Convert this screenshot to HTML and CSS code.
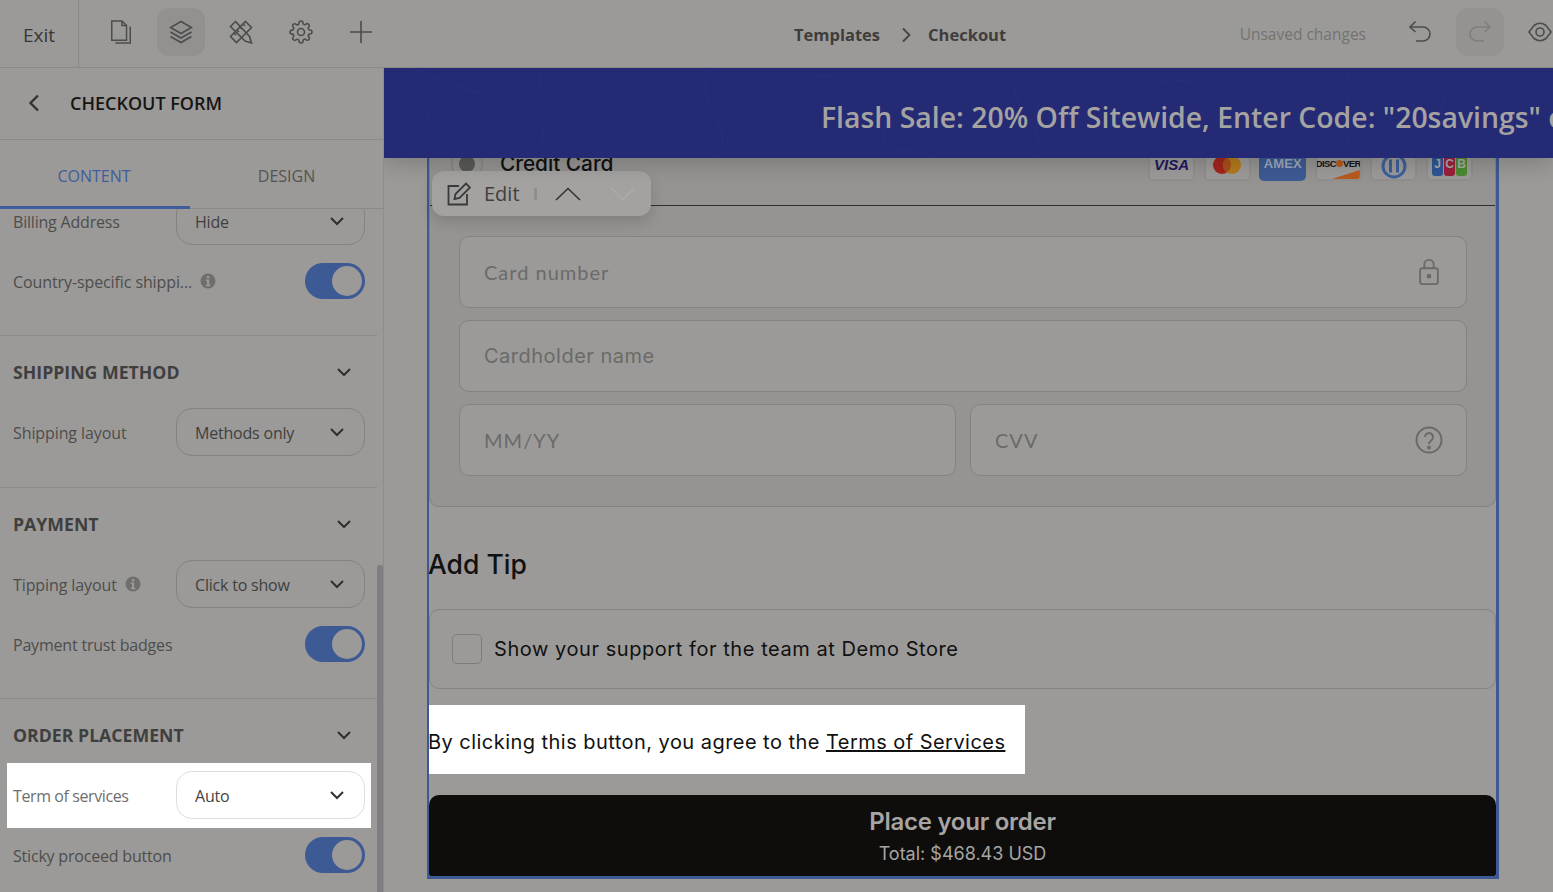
FILE: index.html
```html
<!DOCTYPE html>
<html>
    <head>
        <meta charset="utf-8">
        <title>Checkout template</title>
        <link rel="stylesheet" href="styles.css">
    </head>
    <body>
        <svg class="defs" width="0" height="0">
            <symbol id="chevron" viewBox="0 0 16 10"><path d="M2 2l6 6 6-6" fill="none" stroke="currentColor" stroke-width="2"/></symbol>
            <symbol id="info" viewBox="0 0 16 16"><circle cx="8" cy="8" r="7.5" fill="currentColor"/><rect x="6.9" y="3" width="2.4" height="2.4" fill="#9b9a98"/><path d="M5.8 6.6h3.4v5.2h1.2v1.4H5.8v-1.4h1.2V8H5.8z" fill="#9b9a98"/></symbol>
        </svg>

        <!-- Top bar -->
        <header class="topbar">
            <div class="exit">Exit</div>
            <div class="tools">
                <div class="tool">
                    <svg class="icon" viewBox="0 0 24 26"><path d="M2 1h11l5 5v16H2z"/><path d="M13 1v5h5"/><path d="M22 7v18H6"/></svg>
                </div>
                <div class="tool tool-on">
                    <svg class="icon" viewBox="0 0 24 24"><path d="M12 1.500L1.500 7.500 12 13.500l10.500-6z"/><path d="M1.500 12L12 18l10.500-6"/><path d="M1.500 16.500L12 22.500l10.500-6"/></svg>
                </div>
                <div class="tool">
                    <svg class="icon" viewBox="0 0 24 24"><path d="M16.500 1.500l6 6L7.500 22.500l-6-6z"/><path d="M5 13l2 2M8 10l2 2M11 7l2 2M14 4l2 2"/><path d="M6.500 1.500l-5 5L16 21l6.500 2-2-6.500z"/></svg>
                </div>
                <div class="tool">
                    <svg class="icon" viewBox="0 0 24 24"><circle cx="12" cy="12" r="3.500"/><path d="M19.400 15a1.650 1.650 0 0 0 .33 1.820l.06.06a2 2 0 0 1 0 2.830 2 2 0 0 1-2.830 0l-.06-.06a1.650 1.650 0 0 0-1.820-.33 1.650 1.650 0 0 0-1 1.510V21a2 2 0 0 1-2 2 2 2 0 0 1-2-2v-.09A1.650 1.650 0 0 0 9 19.400a1.650 1.650 0 0 0-1.820.33l-.06.06a2 2 0 0 1-2.830 0 2 2 0 0 1 0-2.830l.06-.06a1.650 1.650 0 0 0 .33-1.820 1.650 1.650 0 0 0-1.510-1H3a2 2 0 0 1-2-2 2 2 0 0 1 2-2h.09A1.650 1.650 0 0 0 4.600 9a1.650 1.650 0 0 0-.33-1.820l-.06-.06a2 2 0 0 1 0-2.830 2 2 0 0 1 2.830 0l.06.06a1.650 1.650 0 0 0 1.820.33H9a1.650 1.650 0 0 0 1-1.510V3a2 2 0 0 1 2-2 2 2 0 0 1 2 2v.09a1.650 1.650 0 0 0 1 1.510 1.650 1.650 0 0 0 1.820-.33l.06-.06a2 2 0 0 1 2.830 0 2 2 0 0 1 0 2.830l-.06.06a1.650 1.650 0 0 0-.33 1.820V9a1.650 1.650 0 0 0 1.510 1H21a2 2 0 0 1 2 2 2 2 0 0 1-2 2h-.09a1.650 1.650 0 0 0-1.510 1z"/></svg>
                </div>
                <div class="tool">
                    <svg class="icon" viewBox="0 0 24 24"><path d="M12 1v22M1 12h22"/></svg>
                </div>
            </div>
            <div class="crumbs">
                <span>Templates</span>
                <svg class="crumb-arrow" viewBox="0 0 10 16"><path d="M2 1.500L8.500 8 2 14.500"/></svg>
                <span>Checkout</span>
            </div>
            <div class="actions">
                <span class="unsaved">Unsaved changes</span>
                <div class="tool">
                    <svg class="icon" viewBox="0 0 24 24"><path d="M7.500 1.500L2 7l5.500 5"/><path d="M2 7h13a6.500 6.500 0 0 1 0 14H8"/></svg>
                </div>
                <div class="tool tool-off">
                    <svg class="icon" viewBox="0 0 24 24"><path d="M16.500 1.500L22 7l-5.500 5"/><path d="M22 7H9a6.500 6.500 0 0 0 0 14h7"/></svg>
                </div>
                <div class="tool">
                    <svg class="icon" viewBox="0 0 24 24"><path d="M1 12L6 5.500Q12 1 18 5.500L23 12l-5 6.500Q12 23 6 18.500z"/><circle cx="12" cy="12" r="4"/></svg>
                </div>
            </div>
        </header>

        <div class="main">
            <!-- Settings sidebar -->
            <aside class="sidebar">
                <div class="side-head">
                    <svg class="back" viewBox="0 0 12 18"><path d="M10 1.500L2.500 9l7.500 7.500"/></svg>
                    <span>CHECKOUT FORM</span>
                </div>
                <div class="tabs">
                    <div class="tab tab-on">CONTENT</div>
                    <div class="tab">DESIGN</div>
                </div>
                <div class="side-scroll">
                    <div class="side-body">
                        <section class="group group-first">
                            <div class="row">
                                <span class="label">Billing Address</span>
                                <div class="select"><span>Hide</span><svg class="chev"><use href="#chevron"/></svg></div>
                            </div>
                            <div class="row">
                                <span class="label label-wide">Country-specific shippi...</span>
                                <svg class="info"><use href="#info"/></svg>
                                <div class="toggle"></div>
                            </div>
                        </section>
                        <section class="group group-short">
                            <div class="group-head"><span>SHIPPING METHOD</span><svg class="chev"><use href="#chevron"/></svg></div>
                            <div class="row">
                                <span class="label label-wide">Shipping layout</span>
                                <div class="select"><span>Methods only</span><svg class="chev"><use href="#chevron"/></svg></div>
                            </div>
                        </section>
                        <section class="group">
                            <div class="group-head"><span>PAYMENT</span><svg class="chev"><use href="#chevron"/></svg></div>
                            <div class="row">
                                <span class="label label-wide">Tipping layout</span>
                                <svg class="info"><use href="#info"/></svg>
                                <div class="select"><span>Click to show</span><svg class="chev"><use href="#chevron"/></svg></div>
                            </div>
                            <div class="row">
                                <span class="label">Payment trust badges</span>
                                <div class="toggle"></div>
                            </div>
                        </section>
                        <section class="group">
                            <div class="group-head"><span>ORDER PLACEMENT</span><svg class="chev"><use href="#chevron"/></svg></div>
                            <div class="row row-lit">
                                <span class="label">Term of services</span>
                                <div class="select"><span>Auto</span><svg class="chev"><use href="#chevron"/></svg></div>
                            </div>
                            <div class="row">
                                <span class="label">Sticky proceed button</span>
                                <div class="toggle"></div>
                            </div>
                        </section>
                    </div>
                    <div class="scrollbar"></div>
                </div>
            </aside>

            <!-- Checkout preview -->
            <div class="canvas">
                <div class="banner">
                    <svg class="banner-lines" viewBox="0 0 1169 90" preserveAspectRatio="none">
                        <path d="M0 14C60 30 30 60 80 90M30 0c50 30 90 20 120 50s-20 30 0 40M160 0c-20 40 40 50 60 90M330 0c-30 30 30 60 0 90M420 10c40-10 90 20 80 50s40 20 50 30M640 0c-30 40 30 50 10 90M760 20c30-20 80 0 90 30s-30 30-20 40M960 0c20 30-20 60 20 90M1080 10c-40 20-20 60 10 80"/>
                    </svg>
                    <span class="banner-text">Flash Sale: 20% Off Sitewide, Enter Code: "20savings" on all orders</span>
                </div>

                <div class="frame">
                    <div class="edit-pop">
                        <svg class="edit-icon" viewBox="0 0 24 24"><path d="M12 4H1.500v18.500H20V12"/><path d="M7.500 17l1-5L19 1.500l4 4L12.500 16z"/></svg>
                        <span>Edit</span>
                        <i class="edit-sep"></i>
                        <svg class="edit-up" viewBox="0 0 26 14"><path d="M1 13L13 1.500 25 13"/></svg>
                        <svg class="edit-down" viewBox="0 0 26 14"><path d="M1 1l12 11.500L25 1"/></svg>
                    </div>

                    <div class="pay-card">
                        <div class="pay-head">
                            <span class="radio"><i></i></span>
                            <span class="pay-name">Credit Card</span>
                            <div class="logos">
                                <div class="logo"><span class="visa">VISA</span></div>
                                <div class="logo">
                                    <svg width="30" height="20" viewBox="0 0 30 20"><circle cx="10" cy="9" r="9" fill="#a3241c"/><circle cx="20" cy="9" r="9" fill="#b27a1c"/><path d="M15 1.500a9 9 0 0 1 0 15 9 9 0 0 1 0-15z" fill="#a8501a"/></svg>
                                </div>
                                <div class="logo logo-amex"><span class="amex">AMEX</span></div>
                                <div class="logo logo-disc"><span class="disc">DISC<i></i>VER</span><b></b></div>
                                <div class="logo">
                                    <svg width="28" height="24" viewBox="0 0 28 24"><circle cx="14" cy="10" r="11" fill="none" stroke="#3d5f9c" stroke-width="3"/><path d="M10.500 3.500v13M17.500 3.500v13" stroke="#3d5f9c" stroke-width="3"/></svg>
                                </div>
                                <div class="logo">
                                    <div class="jcb"><span class="jcb-j">J</span><span class="jcb-c">C</span><span class="jcb-b">B</span></div>
                                </div>
                            </div>
                        </div>
                        <div class="fields">
                            <div class="field">
                                <span class="hand">Card number</span>
                                <svg class="field-icon" viewBox="0 0 24 30"><rect x="2.500" y="11" width="19" height="17" rx="2.500"/><path d="M7 11V7a5 5 0 0 1 10 0v4"/><circle cx="12" cy="19.500" r="1.500" fill="#6b6a69"/></svg>
                            </div>
                            <div class="field"><span>Cardholder name</span></div>
                            <div class="field-pair">
                                <div class="field"><span class="hand">MM/YY</span></div>
                                <div class="field">
                                    <span class="hand">CVV</span>
                                    <svg class="field-icon" viewBox="0 0 28 28"><circle cx="14" cy="14" r="12.500"/><path d="M10 11a4 4 0 1 1 6.500 3.200c-1.600 1.200-2.500 2-2.500 3.800"/><circle cx="14" cy="21.500" r="1" fill="#6b6a69"/></svg>
                                </div>
                            </div>
                        </div>
                    </div>

                    <h2 class="tip-title">Add Tip</h2>
                    <div class="tip-box">
                        <span class="checkbox"></span>
                        <span>Show your support for the team at Demo Store</span>
                    </div>
                    <p class="terms"><span>By clicking this button, you agree to the <a>Terms of Services</a></span></p>
                    <div class="place">
                        <strong>Place your order</strong>
                        <span>Total: $468.43 USD</span>
                    </div>
                </div>
            </div>
        </div>
    </body>
</html>
```

FILE: styles.css
```css
* {
    box-sizing: border-box;
}
html, body {
    height: 100%;
}
body {
    margin: 0;
    overflow: hidden;
    background-color: #9b9a98;
    color: #3f3f3f;
    font-family: "Open Sans", "Noto Sans", sans-serif;
}
.defs {
    position: absolute;
}

/* Top bar */
.topbar {
    display: flex;
    align-items: center;
    height: 68px;
    border-bottom: 1px solid #8a8987;
    overflow: hidden;
}
.exit {
    display: flex;
    align-items: center;
    width: 79px;
    height: 67px;
    padding: 3px 0 0 23px;
    border-right: 1px solid #8a8987;
    font-size: 19px;
    color: #3a3735;
}
.tools {
    display: flex;
    gap: 12px;
    margin-left: 18px;
}
.tool {
    display: flex;
    align-items: center;
    justify-content: center;
    flex: none;
    width: 48px;
    height: 48px;
    margin-top: -3px;
    border-radius: 12px;
    color: #4c4c4c;
}
.tool-on {
    background-color: #929190;
}
.tool-off {
    background-color: #949391;
    color: #7f7e7d;
}
.icon {
    width: 24px;
    height: 24px;
    fill: none;
    stroke: currentColor;
    stroke-width: 1.6;
}
.crumbs {
    display: flex;
    align-items: center;
    margin-left: 409px;
    padding-top: 2px;
    font-size: 16.500px;
    font-weight: 700;
    color: #3f3d3b;
}
.crumb-arrow {
    width: 10px;
    height: 16px;
    margin: 0 17px 0 21px;
    fill: none;
    stroke: #444;
    stroke-width: 1.800;
}
.actions {
    display: flex;
    align-items: center;
    gap: 12px;
    margin-left: auto;
    margin-right: -11px;
}
.unsaved {
    margin-right: 18px;
    font-size: 15.500px;
    color: #747371;
}

.main {
    display: flex;
    height: 824px;
    overflow: hidden;
}

/* Sidebar */
.sidebar {
    display: flex;
    flex-direction: column;
    flex: none;
    width: 384px;
    border-right: 1px solid #8e8d8b;
}
.side-head {
    display: flex;
    align-items: center;
    flex: none;
    height: 72px;
    padding: 0 0 2px 28px;
    border-bottom: 1px solid #8a8987;
    font-size: 18px;
    font-weight: 600;
    color: #161514;
}
.back {
    width: 12px;
    height: 18px;
    margin-right: 30px;
    fill: none;
    stroke: #333;
    stroke-width: 2.400;
}
.tabs {
    display: flex;
    flex: none;
    height: 69px;
    border-bottom: 1px solid #8a8987;
}
.tab {
    width: 190px;
    padding-top: 25px;
    text-align: center;
    font-size: 16px;
    color: #555452;
}
.tab + .tab {
    padding-left: 3px;
}
.tab-on {
    border-bottom: 3px solid #3f5c9c;
    margin-bottom: -1px;
    padding-right: 2px;
    color: #3f5c9c;
}
.side-scroll {
    display: flex;
    flex: 1;
    min-height: 0;
    overflow: hidden;
}
.side-body {
    flex: none;
    width: 377px;
}
.scrollbar {
    flex: none;
    width: 6px;
    margin-top: 356px;
    border-radius: 3px 3px 0 0;
    background-color: #7f7d7f;
}
.group {
    padding: 24px 12px 36px 13px;
    border-bottom: 1px solid #8c8b89;
}
.group:last-child {
    border-bottom: 0;
}
.group-first {
    margin-top: -12px;
    padding-top: 0;
}
.group-short {
    padding-bottom: 31px;
}
.group-head {
    display: flex;
    align-items: center;
    justify-content: space-between;
    height: 24px;
    margin-bottom: 24px;
    padding-right: 13px;
    font-size: 17.700px;
    font-weight: 700;
    color: #403f3f;
}
.row {
    display: flex;
    align-items: center;
    margin-bottom: 18px;
}
.row:last-child {
    margin-bottom: 0;
}
.row-lit {
    margin: -8px -6px 9px;
    padding: 8px 6px 9px;
    background-color: #fff;
}
.row-lit .label {
    letter-spacing: -0.400px;
    color: #6e6e6e;
}
.row-lit .select {
    border-color: #dedede;
    color: #444;
}
.row-lit .chev {
    color: #333;
}
.label {
    padding-top: 2px;
    font-size: 16px;
    letter-spacing: -0.200px;
    color: #4e4d4c;
}
.label-wide {
    letter-spacing: -0.100px;
}
.info {
    width: 16px;
    height: 16px;
    margin-left: 8px;
    color: #6f6e6d;
}
.select {
    display: flex;
    align-items: center;
    justify-content: space-between;
    flex: none;
    width: 189px;
    height: 48px;
    margin-left: auto;
    padding: 0 19px 0 18px;
    border: 1px solid #84837f;
    border-radius: 16px;
    font-size: 16px;
    letter-spacing: -0.200px;
    color: #3f3f3f;
}
.select span {
    padding-top: 2px;
}
.chev {
    width: 16px;
    height: 10px;
    color: #2f2f2f;
}
.toggle {
    width: 60px;
    height: 36px;
    margin-left: auto;
    padding: 3px 3px 3px 27px;
    border-radius: 18px;
    background-color: #3d5a94;
}
.toggle::after {
    content: "";
    display: block;
    width: 30px;
    height: 30px;
    border-radius: 50%;
    background-color: #9b9a98;
}

/* Preview */
.canvas {
    position: relative;
    flex: 1;
    min-width: 0;
    padding-left: 43px;
    overflow: hidden;
}
.banner {
    position: absolute;
    top: 0;
    left: 0;
    right: 0;
    z-index: 2;
    display: flex;
    align-items: center;
    height: 90px;
    padding: 7px 0 0 437px;
    overflow: hidden;
    background-color: #252a75;
    box-shadow: 0 6px 20px rgba(0, 0, 0, 0.18);
    white-space: nowrap;
    font-size: 28.400px;
    font-weight: 600;
    color: #a4a3a1;
}
.banner-lines {
    position: absolute;
    top: 0;
    left: 0;
    width: 100%;
    height: 100%;
    fill: none;
    stroke: #2a2f7c;
    stroke-width: 1;
}
.banner-text {
    position: relative;
}
.frame {
    position: relative;
    width: 1072px;
    height: 811px;
    padding-top: 80px;
    border: solid #3d5a94;
    border-width: 0 3px 3px 2px;
    font-family: Inter, "Noto Sans", sans-serif;
    color: #111;
}
.edit-pop {
    position: absolute;
    top: 103px;
    left: 3px;
    z-index: 1;
    display: flex;
    align-items: center;
    width: 219px;
    height: 45px;
    padding-left: 15px;
    border-radius: 12px;
    background-color: #a3a2a0;
    box-shadow: 0 6px 14px rgba(0, 0, 0, 0.14);
    font-family: "Open Sans", sans-serif;
    font-size: 20px;
    color: #3f3f3f;
}
.edit-icon {
    width: 24px;
    height: 24px;
    margin-right: 13px;
    fill: none;
    stroke: #3a3a3a;
    stroke-width: 1.800;
}
.edit-sep {
    width: 3px;
    height: 12px;
    margin: 0 18px 0 14px;
    background-color: #8f8e8c;
}
.edit-up, .edit-down {
    width: 26px;
    height: 14px;
    fill: none;
    stroke-width: 1.600;
}
.edit-up {
    stroke: #333;
}
.edit-down {
    margin-left: 29px;
    stroke: #adacaa;
}
.pay-card {
    padding-bottom: 30px;
    border: solid #84837f;
    border-width: 0 1px 1px;
    border-radius: 0 0 10px 10px;
    background-color: #959492;
}
.pay-head {
    display: flex;
    align-items: center;
    height: 58px;
    padding: 0 22px 24px 21px;
    border-bottom: 1px solid #2f2f2f;
}
.radio {
    display: flex;
    align-items: center;
    justify-content: center;
    width: 32px;
    height: 32px;
    margin-top: -1px;
    border-radius: 50%;
    border: 1px solid #7e7d7b;
}
.radio i {
    width: 16px;
    height: 16px;
    border-radius: 50%;
    background-color: #595958;
}
.pay-name {
    margin: -3px 0 0 17px;
    font-size: 20.800px;
    font-weight: 500;
}
.logos {
    display: flex;
    gap: 8.600px;
    margin-left: auto;
}
.logo {
    position: relative;
    display: flex;
    align-items: flex-start;
    justify-content: center;
    width: 47px;
    height: 33px;
    padding-top: 6px;
    border: 2px solid #908f8d;
    border-radius: 5px;
    background-color: #9c9b99;
    overflow: hidden;
}
.visa {
    font-family: "Liberation Sans", sans-serif;
    font-size: 15px;
    font-weight: 700;
    font-style: italic;
    color: #1f1560;
}
.logo-amex {
    border-color: #3d5a94;
    background-color: #3d5a94;
}
.amex {
    font-family: "Liberation Sans", sans-serif;
    font-size: 13px;
    font-weight: 700;
    letter-spacing: 0.100px;
    color: #9ba6bb;
}
.disc {
    display: flex;
    align-items: center;
    margin-top: 2px;
    font-family: "Liberation Sans", sans-serif;
    font-size: 9.500px;
    font-weight: 700;
    letter-spacing: -0.600px;
    color: #151515;
}
.disc i {
    width: 7px;
    height: 7px;
    border-radius: 50%;
    background-color: #b85a1e;
}
.logo-disc b {
    position: absolute;
    right: 0;
    bottom: 0;
    width: 28px;
    height: 9px;
    background-color: #b85a1e;
    clip-path: polygon(100% 0, 100% 100%, 0 100%);
}
.jcb {
    display: flex;
    gap: 1px;
    margin-top: -6px;
}
.jcb span {
    width: 11px;
    height: 26px;
    padding-top: 7px;
    border-radius: 0 0 3px 3px;
    text-align: center;
    font-family: "Liberation Sans", sans-serif;
    font-size: 12px;
    font-weight: 700;
    color: #aaa9a7;
}
.jcb-j {
    background-color: #2f5596;
}
.jcb-c {
    background-color: #9c1f3a;
}
.jcb-b {
    background-color: #4c8a32;
}
.fields {
    display: flex;
    flex-direction: column;
    gap: 12px;
    padding: 30px 28px 0 29px;
}
.field {
    display: flex;
    align-items: center;
    justify-content: space-between;
    height: 72px;
    padding: 0 23px 0 24px;
    border: 1px solid #84837f;
    border-radius: 10px;
    background-color: #9b9a98;
    font-size: 20px;
    letter-spacing: 0.500px;
    color: #6b6a69;
}
.field-pair {
    display: flex;
    gap: 14px;
}
.field-pair .field {
    flex: 1;
}
.hand {
    font-family: Lato, sans-serif;
    letter-spacing: 1px;
}
.field-icon {
    width: 28px;
    height: 28px;
    fill: none;
    stroke: #6b6a69;
    stroke-width: 2;
}
.tip-title {
    margin: 41px 0 29px -1px;
    font-size: 26.500px;
    font-weight: 500;
    line-height: 32px;
}
.tip-box {
    display: flex;
    align-items: center;
    gap: 12px;
    height: 80px;
    padding-left: 22px;
    border: 1px solid #84837f;
    border-radius: 10px;
    font-size: 20px;
    letter-spacing: 0.560px;
}
.checkbox {
    width: 30px;
    height: 30px;
    border: 1px solid #7e7d7b;
    border-radius: 5px;
}
.terms {
    width: 596px;
    height: 69px;
    margin: 16px 0 21px;
    background-color: #fff;
    font-size: 20px;
    line-height: 75px;
    letter-spacing: 0.460px;
    white-space: nowrap;
}
.terms span {
    margin-left: -1px;
}
.terms a {
    text-decoration: underline;
}
.place {
    display: flex;
    flex-direction: column;
    align-items: center;
    height: 81px;
    padding-top: 10px;
    border-radius: 10px 10px 2px 2px;
    background-color: #0e0d0c;
    color: #a6a5a3;
}
.place strong {
    font-size: 24px;
    font-weight: 600;
    line-height: 34px;
    letter-spacing: -0.250px;
}
.place span {
    margin-top: 1px;
    font-size: 18px;
    line-height: 28px;
}
```
